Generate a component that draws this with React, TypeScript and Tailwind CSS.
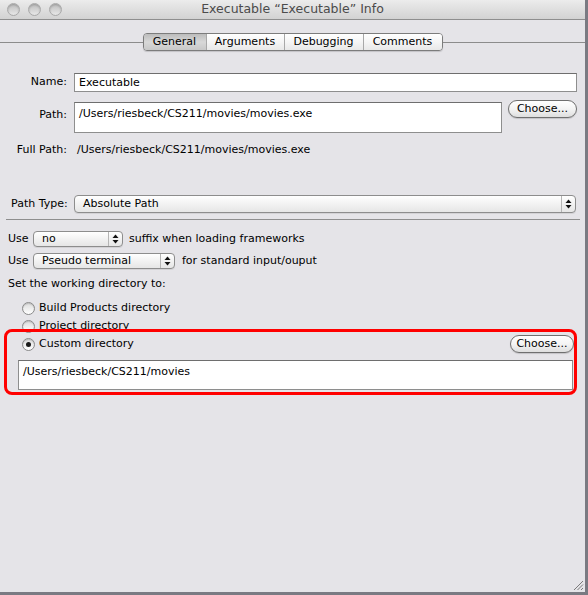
import type { ReactNode } from "react";

const font = { fontFamily: '"DejaVu Sans", "Liberation Sans", sans-serif' };

// Little up/down arrows at the right of an Aqua popup.
function Arrows() {
  return (
    <svg width="7" height="10" viewBox="0 0 7 10" aria-hidden="true">
      <path d="M3.5 0.5 L6.5 4 L0.5 4 Z" fill="#111" />
      <path d="M3.5 9.5 L6.5 6 L0.5 6 Z" fill="#111" />
    </svg>
  );
}

function Popup({ label, className }: { label: string; className: string }) {
  return (
    <div
      className={`flex items-stretch overflow-hidden rounded-[4px] border border-[#8d8d8d] bg-gradient-to-b from-white via-[#f2f2f2] to-[#e6e6e6] shadow-[0_1px_0_rgba(0,0,0,0.08)] ${className}`}
    >
      <span className="flex flex-1 items-center truncate pl-[8px] text-[11px] text-black">
        {label}
      </span>
      <span className="flex w-[14px] items-center justify-center border-l border-[#b5b5b5]">
        <Arrows />
      </span>
    </div>
  );
}

function PillButton({ children, className = "" }: { children: ReactNode; className?: string }) {
  return (
    <button
      type="button"
      className={`flex h-[18px] items-center justify-center rounded-full border border-[#6f6f6f] bg-gradient-to-b from-white via-[#f4f4f4] to-[#dedede] text-[11px] text-black shadow-[0_1px_1px_rgba(0,0,0,0.15)] ${className}`}
    >
      {children}
    </button>
  );
}

function Radio({ label, checked = false }: { label: string; checked?: boolean }) {
  return (
    <div className="flex h-[18px] items-center">
      <span className="ml-[22px] flex size-[13px] items-center justify-center rounded-full border border-[#8a8a8a] bg-gradient-to-b from-[#dcdcdc] to-white shadow-[inset_0_1px_1px_rgba(0,0,0,0.15)]">
        {checked ? <span className="size-[5px] rounded-full bg-[#1a1a1a]" /> : null}
      </span>
      <span className="ml-[4px] text-[11px] text-black">{label}</span>
    </div>
  );
}

const tabs = ["General", "Arguments", "Debugging", "Comments"];
const tabWidths = ["w-[62px]", "w-[78px]", "w-[79px]", "w-[79px]"];

export default function App() {
  return (
    <div className="h-[595px] w-[588px] bg-[#7a7a82]" style={font}>
      <div className="relative flex h-[592px] w-[585px] flex-col bg-[#e5e4e8]">
        {/* Title bar */}
        <div className="relative flex h-[20px] flex-none items-center justify-center border-b border-[#8e8e8e] bg-gradient-to-b from-[#ececec] to-[#d2d2d2]">
          <div className="absolute top-[3px] left-[7px] flex gap-[8px]">
            {[0, 1, 2].map((i) => (
              <span
                key={i}
                className="size-[13px] rounded-full border border-[#a9a9a9] bg-gradient-to-b from-[#bdbdbd] to-[#e8e8e8] shadow-[inset_0_1px_2px_rgba(0,0,0,0.2)]"
              />
            ))}
          </div>
          <span className="text-[12.5px] leading-none text-[#4b4b4b]">
            Executable “Executable” Info
          </span>
        </div>

        {/* Tabs */}
        <div className="mt-[13px] flex h-[18px] items-center">
          <span className="h-px flex-1 bg-[#8c8c8c]" />
          <div className="flex h-[18px] overflow-hidden rounded-[4px] border border-[#7c7c7c] shadow-[0_1px_1px_rgba(0,0,0,0.15)]">
            {tabs.map((t, i) => (
              <span
                key={t}
                className={`flex items-center justify-center text-[11px] text-black ${tabWidths[i]} ${
                  i > 0 ? "border-l border-[#a8a8a8]" : ""
                } ${
                  i === 0
                    ? "bg-gradient-to-b from-[#bcbcbc] via-[#d8d8d8] to-[#c8c8c8]"
                    : "bg-gradient-to-b from-white via-[#f5f5f5] to-[#e8e8e8]"
                }`}
              >
                {t}
              </span>
            ))}
          </div>
          <span className="h-px flex-1 bg-[#8c8c8c]" />
        </div>

        {/* Name */}
        <div className="mt-[22px] flex h-[19px] items-center">
          <span className="w-[67px] text-right text-[11px] text-black">Name:</span>
          <div className="ml-[7px] flex h-[19px] w-[503px] items-center border border-[#8e8e8e] border-t-[#6e6e6e] bg-white pt-[1px] pl-[4px] text-[11px] text-black">
            Executable
          </div>
        </div>

        {/* Path */}
        <div className="mt-[8px] flex h-[33px] items-start">
          <span className="mt-[7px] w-[67px] text-right text-[11px] text-black">Path:</span>
          <div className="mt-[2px] ml-[7px] h-[31px] w-[428px] border border-[#8e8e8e] border-t-[#6e6e6e] bg-white pt-[3px] pl-[4px] text-[11px] text-black">
            /Users/riesbeck/CS211/movies/movies.exe
          </div>
          <PillButton className="ml-[6px] w-[69px]">Choose...</PillButton>
        </div>

        {/* Full Path */}
        <div className="mt-[10px] flex h-[14px] items-center">
          <span className="w-[67px] text-right text-[11px] text-black">Full Path:</span>
          <span className="ml-[10px] text-[11px] text-black">
            /Users/riesbeck/CS211/movies/movies.exe
          </span>
        </div>

        {/* Path Type */}
        <div className="mt-[38px] flex h-[18px] items-center">
          <span className="w-[74px] pl-[11px] text-[11px] whitespace-nowrap text-black">Path Type:</span>
          <Popup label="Absolute Path" className="h-[18px] w-[502px]" />
        </div>

        <div className="mt-[6px] ml-[6px] h-px w-[574px] bg-[#8e8e8e]" />

        {/* Use rows */}
        <div className="mt-[11px] flex h-[16px] items-center">
          <span className="w-[33px] pl-[8px] text-[11px] text-black">Use</span>
          <Popup label="no" className="h-[16px] w-[90px]" />
          <span className="ml-[6px] text-[11px] text-black">suffix when loading frameworks</span>
        </div>
        <div className="mt-[6px] flex h-[16px] items-center">
          <span className="w-[33px] pl-[8px] text-[11px] text-black">Use</span>
          <Popup label="Pseudo terminal" className="h-[16px] w-[142px]" />
          <span className="ml-[7px] text-[11px] text-black">for standard input/ouput</span>
        </div>

        <div className="mt-[8px] flex h-[14px] items-center pl-[8px] text-[11px] text-black">
          Set the working directory to:
        </div>

        {/* Working directory radios */}
        <div className="mt-[8px] flex flex-col">
          <Radio label="Build Products directory" />
          <Radio label="Project directory" />
          <div className="flex h-[18px] items-center justify-between pr-[11px]">
            <Radio label="Custom directory" checked />
            <PillButton className="w-[64px]">Choose...</PillButton>
          </div>
        </div>

        <div className="mt-[7px] ml-[18px] h-[30px] w-[555px] border border-[#8e8e8e] border-t-[#6e6e6e] bg-white pt-[3px] pl-[4px] text-[11px] text-black">
          /Users/riesbeck/CS211/movies
        </div>

        {/* Red annotation drawn over the custom directory block */}
        <div className="pointer-events-none absolute top-[329px] left-[4px] h-[66px] w-[573px] rounded-[8px] border-[3px] border-[#ff0000]" />

        {/* Resize grip */}
        <svg
          className="absolute right-[1px] bottom-[1px]"
          width="11"
          height="11"
          viewBox="0 0 11 11"
          aria-hidden="true"
        >
          <path d="M10 1 L1 10 M10 4.5 L4.5 10 M10 8 L8 10" stroke="#7a7a7a" strokeWidth="1" />
        </svg>
      </div>
    </div>
  );
}
